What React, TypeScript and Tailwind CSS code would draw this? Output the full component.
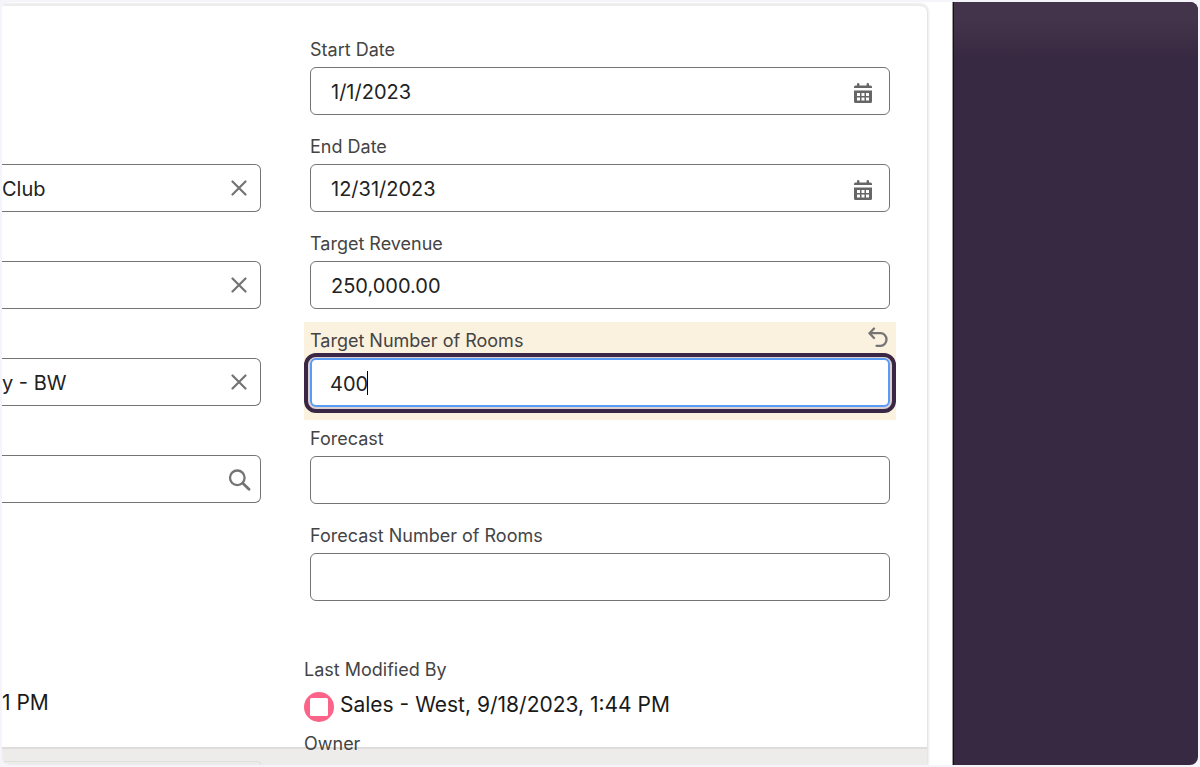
import { useState } from "react";
import type { ReactNode } from "react";

function CalendarIcon() {
  return (
    <svg width="20" height="22" viewBox="0 0 20 22" fill="currentColor">
      <path d="M1 6V5Q1 3.500 2.500 3.500H4V2.200a1.200 1.200 0 0 1 2.400 0V3.500h7.200V2.200a1.200 1.200 0 0 1 2.400 0V3.500h1.500Q19 3.500 19 5V6Z" />
      <path
        fillRule="evenodd"
        d="M1 8.500H19V19.500Q19 21 17.500 21H2.500Q1 21 1 19.500ZM4 11V14H7V11ZM8.500 11V14H11.500V11ZM13 11V14H16V11ZM4 15.500V18.500H7V15.500ZM8.500 15.500V18.500H11.500V15.500ZM13 15.500V18.500H16V15.500Z"
      />
    </svg>
  );
}

function ClearIcon() {
  return (
    <svg width="16" height="16" viewBox="0 0 16 16" fill="none" stroke="currentColor" strokeWidth="2.200" strokeLinecap="round">
      <path d="M1.500 1.500 14.500 14.500M14.500 1.500 1.500 14.500" />
    </svg>
  );
}

function SearchIcon() {
  return (
    <svg width="24" height="24" viewBox="0 0 24 24" fill="none" stroke="currentColor" strokeWidth="2.300" strokeLinecap="round">
      <circle cx="10.300" cy="10.800" r="7.300" />
      <path d="M15.800 16.300 22 22.300" strokeWidth="2.800" />
    </svg>
  );
}

function UndoIcon() {
  return (
    <svg width="20" height="20" viewBox="0 0 20 20" fill="none" stroke="currentColor" strokeWidth="2.300" strokeLinecap="round" strokeLinejoin="round">
      <path d="M6 1.500 1.500 6.200 6 11" />
      <path d="M1.800 6.200H12.500A6 6.300 0 0 1 12.500 18.800H8.500" />
    </svg>
  );
}

const inputClass =
  "block w-full h-12 rounded-md border border-[#747474] bg-white pt-0.5 pl-5 pr-12 text-xl text-[#222222] outline-none";

function Field({
  id,
  label,
  initial = "",
  withCalendar = false,
}: {
  id: string;
  label: string;
  initial?: string;
  withCalendar?: boolean;
}) {
  const [value, setValue] = useState(initial);

  return (
    <div className="px-1.5 pt-[7px] pb-[13px]">
      <label htmlFor={id} className="mb-[5px] block text-lg leading-6 text-[#444444]">
        {label}
      </label>
      <div className="relative">
        <input id={id} value={value} onChange={(e) => setValue(e.target.value)} className={inputClass} />
        {withCalendar && (
          <button
            type="button"
            aria-label={`Select a date for ${label}`}
            className="absolute inset-y-0 right-[17px] flex items-center pt-1 text-[#666666]"
          >
            <CalendarIcon />
          </button>
        )}
      </div>
    </div>
  );
}

// Edited field: tinted row, undo button and the focus outline
function EditedField() {
  const [value, setValue] = useState("400");

  return (
    <div className="bg-[#fbf1df] px-1.5 pt-[7px] pb-[13px]">
      <div className="mb-[5px] flex items-start justify-between">
        <label htmlFor="target-rooms" className="block text-lg leading-6 text-[#444444]">
          Target Number of Rooms
        </label>
        <button type="button" aria-label="Undo Target Number of Rooms" className="-mt-0.5 mr-0.5 text-[#747474]">
          <UndoIcon />
        </button>
      </div>
      <div className="relative">
        <div className="pointer-events-none absolute -inset-x-1.5 -top-[5px] -bottom-1.5 rounded-xl border-4 border-[#3a2745] bg-[#dcd0d3]" />
        <input
          id="target-rooms"
          value={value}
          onChange={(e) => setValue(e.target.value)}
          className="relative block h-[49px] w-full rounded-md border-2 border-[#5a9cf5] bg-white pt-0.5 pl-[18px] pr-12 text-xl text-[#222222] caret-transparent outline-none"
        />
        <span className="pointer-events-none absolute top-[13px] left-[57px] h-6 w-px bg-black" />
      </div>
    </div>
  );
}

function Lookup({ label, initial = "", icon }: { label: string; initial?: string; icon: ReactNode }) {
  const [value, setValue] = useState(initial);

  return (
    <div className="relative">
      <input
        aria-label={label}
        value={value}
        onChange={(e) => setValue(e.target.value)}
        className="block h-12 w-full rounded-r-md border border-l-0 border-[#747474] bg-white pt-0.5 pr-12 text-xl text-[#222222] outline-none"
      />
      <button
        type="button"
        aria-label={`Edit ${label}`}
        className="absolute inset-y-0 right-2 flex w-7 items-center justify-center text-[#747474]"
      >
        {icon}
      </button>
    </div>
  );
}

export default function App() {
  return (
    <div className="h-screen bg-[#f4f4fa] p-0.5 font-['Inter',sans-serif]">
      <div className="flex h-full overflow-hidden rounded-lg bg-white">
        <main className="min-w-0 flex-1 border-r border-[#9a9a98] pt-0.5 pr-[25px]">
          <div className="flex h-full flex-col rounded-tr-lg border-t-2 border-[#ececec] shadow-[1px_0_3px_rgba(0,0,0,0.16)]">
            <div className="relative z-10 flex min-h-0 flex-1">
              <div className="w-[259px] shrink-0 pt-[158px]">
                <div className="flex flex-col gap-[49px]">
                  <Lookup label="Account" initial="Club" icon={<ClearIcon />} />
                  <Lookup label="Contact" icon={<ClearIcon />} />
                  <Lookup label="Property" initial="y - BW" icon={<ClearIcon />} />
                  <Lookup label="Agency" icon={<SearchIcon />} />
                </div>
                <p className="mt-[188px] text-[21px] leading-6 text-[#1a1a1a]">1 PM</p>
              </div>

              <div className="ml-[43px] min-w-0 flex-1 pt-[25px] pr-[31px]">
                <Field id="start-date" label="Start Date" initial="1/1/2023" withCalendar />
                <Field id="end-date" label="End Date" initial="12/31/2023" withCalendar />
                <Field id="target-revenue" label="Target Revenue" initial="250,000.00" />
                <EditedField />
                <Field id="forecast" label="Forecast" />
                <Field id="forecast-rooms" label="Forecast Number of Rooms" />

                <div className="mt-11 text-lg leading-6 text-[#444444]">Last Modified By</div>
                <div className="mt-2.5 flex h-[30px] items-center gap-1.5 text-[21px] text-[#1a1a1a]">
                  <svg width="30" height="30" viewBox="0 0 30 30" className="shrink-0">
                    <circle cx="15" cy="15" r="15" fill="#fb6488" />
                    <rect x="6" y="6" width="18" height="18" rx="1.500" fill="#fff" />
                  </svg>
                  <span className="-mt-1 whitespace-nowrap">
                    <a href="#sales-west">Sales - West</a>, 9/18/2023, 1:44 PM
                  </span>
                </div>
                <div className="mt-2.5 text-lg leading-6 text-[#444444]">Owner</div>
              </div>
            </div>

            <footer className="h-[18px] shrink-0 border-t-2 border-[#dddddb] bg-[#edecea] pt-3">
              <div className="h-1 w-[259px] rounded-tr-md border-t border-r border-[#e0e0de]" />
            </footer>
          </div>
        </main>

        <aside className="w-[245px] shrink-0 border-l border-[#160c28] bg-[#382942]">
          <div className="h-14 bg-linear-to-b from-[#44344b] from-30% to-[#382942]" />
        </aside>
      </div>
    </div>
  );
}
